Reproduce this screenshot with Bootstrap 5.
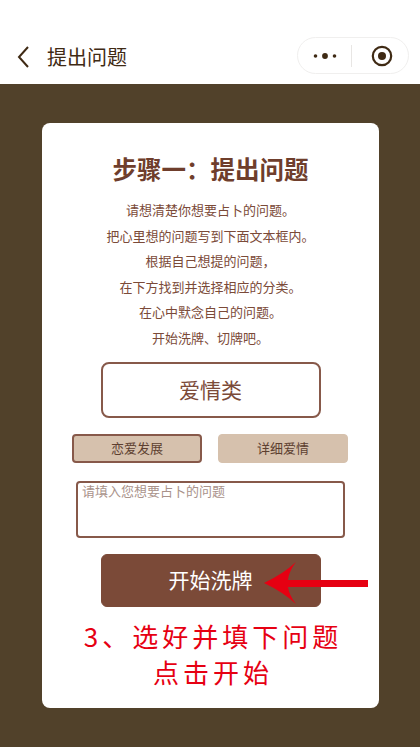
<!DOCTYPE html>
<html lang="zh">
<head>
<meta charset="utf-8">
<link href="https://cdn.jsdelivr.net/npm/bootstrap@5.3.0/dist/css/bootstrap.min.css" rel="stylesheet">
<style>
html,body{height:100%;margin:0}
body{font-family:"Noto Sans CJK SC","Liberation Sans",sans-serif;background:#51412a;overflow:hidden}
.top-bar{height:84px;background:#fff;padding:43px 11px 0 16px;color:#3f2a14}
.back-icon{width:16px;height:24px;margin-right:15px}
.top-title{font-size:20px;line-height:28px}
.capsule{width:112px;height:37px;border:1px solid #f0efee;border-radius:19px;margin-top:-6px}
.cap-part{flex:1 1 0}
.cap-right{padding-left:3px}
.cap-line{width:1px;height:22px;background:#e8e6e4}
.sheet{width:337px;height:585px;margin:39px 0 0 42px;background:#fff;border-radius:8px;padding-top:27px;color:#7b4a38;position:relative}
.sheet-title{font-size:24.5px;line-height:38px;font-weight:700;color:#6f3e2c;margin-bottom:9px}
.intro{font-size:13px;line-height:25.6px;margin:0}
.cat-box{width:220px;height:56px;margin:11px auto 16px;border:2px solid #87594a;border-radius:8px;font-size:21px}
.choice-row{padding:0 31px 0 30px;gap:16px}
.choice{width:130px;height:29px;background:#d6c1ad;border:1px solid #d6c1ad;border-radius:4px;font-size:13px;color:#5d3f30;padding:0}
.choice-on{border:2px solid #87594a}
.ask{display:block;width:269px;height:57px;margin:18px 0 16px 34px;border:2px solid #87594a;border-radius:4px;font-size:13px;line-height:15px;padding:0 4px;resize:none;outline:0}
.ask::placeholder{color:#a9928a;opacity:1}
.go{display:block;width:220px;height:53px;margin:0 auto;background:#7b4a38;border:1px solid #7b4a38;border-radius:6px;color:#fff;font-size:21px;padding:0}
.hint{color:#e60012;font-size:26px;line-height:36px;letter-spacing:4px;margin:11px 0 0;padding-left:5px}
.pointer{position:absolute;left:221px;top:435px;width:106px;height:50px}
</style>
</head>
<body>
<header class="top-bar d-flex align-items-start justify-content-between">
  <div class="d-flex align-items-center">
    <svg class="back-icon" viewBox="0 0 16 24" fill="none" stroke="#3f2a14" stroke-width="2"><path d="M12 2 3 12l9 10"/></svg>
    <span class="top-title">提出问题</span>
  </div>
  <div class="capsule d-flex align-items-center">
    <div class="cap-part d-flex justify-content-center">
      <svg width="24" height="10" viewBox="0 0 24 10" fill="#3f2a14"><circle cx="2.5" cy="5" r="1.8"/><circle cx="12" cy="5" r="2.9"/><circle cx="21.5" cy="5" r="1.8"/></svg>
    </div>
    <div class="cap-line"></div>
    <div class="cap-part cap-right d-flex justify-content-center">
      <svg width="22" height="22" viewBox="0 0 22 22"><circle cx="11" cy="11" r="9.2" fill="none" stroke="#3f2a14" stroke-width="2.2"/><circle cx="11" cy="11" r="4" fill="#3f2a14"/></svg>
    </div>
  </div>
</header>
<main class="sheet text-center">
  <h1 class="sheet-title">步骤一：提出问题</h1>
  <p class="intro">请想清楚你想要占卜的问题。</p>
  <p class="intro">把心里想的问题写到下面文本框内。</p>
  <p class="intro">根据自己想提的问题，</p>
  <p class="intro">在下方找到并选择相应的分类。</p>
  <p class="intro">在心中默念自己的问题。</p>
  <p class="intro">开始洗牌、切牌吧。</p>
  <div class="cat-box d-flex align-items-center justify-content-center">爱情类</div>
  <div class="choice-row d-flex justify-content-between">
    <button class="btn choice choice-on" type="button">恋爱发展</button>
    <button class="btn choice" type="button">详细爱情</button>
  </div>
  <textarea class="ask" placeholder="请填入您想要占卜的问题"></textarea>
  <button class="btn go" type="button">开始洗牌</button>
  <p class="hint">3、选好并填下问题<br>点击开始</p>
  <svg class="pointer" viewBox="0 0 106 50" fill="#e60012"><path d="M1 25Q20 16 33 4Q26 13 25 22H105V29H25Q26 37 33 46Q20 34 1 25Z"/></svg>
</main>
<script src="https://cdn.jsdelivr.net/npm/bootstrap@5.3.0/dist/js/bootstrap.bundle.min.js"></script>
</body>
</html>
